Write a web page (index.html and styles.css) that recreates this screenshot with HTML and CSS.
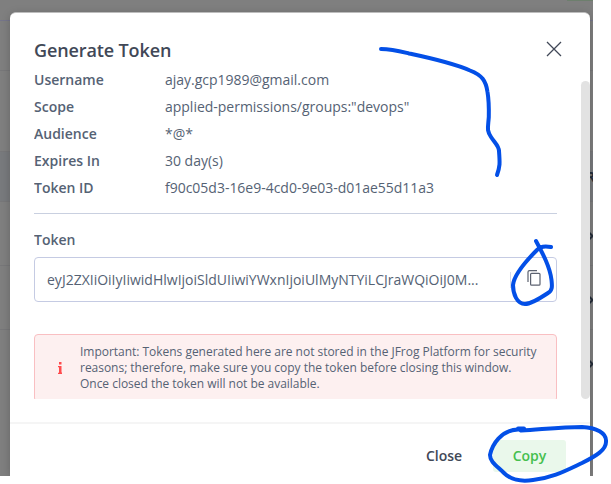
FILE: index.html
```html
<!DOCTYPE html>
<html lang="en">
<head>
<meta charset="utf-8">
<title>Generate Token</title>
<link rel="stylesheet" href="styles.css">
</head>
<body>
<div class="backdrop">
  <svg class="page-behind" width="593" height="476" viewBox="0 0 593 476">
    <rect y="151" width="593" height="50" fill="#787a7d"/>
    <path d="M0 20.500H593" stroke="#75758a"/>
    <path d="M0 70.500H593M0 151.500H593M0 201.500H593M0 265.500H593M0 329.500H593" stroke="#777779"/>
    <rect x="567" width="26" height="1" fill="#6d7f6d"/>
    <text x="586" y="182" class="behind-text">R</text>
    <path d="M588.500 232l4 4-4 4M588.500 296l4 4-4 4M588.500 360l4 4-4 4" fill="none" stroke="#252d3a" stroke-width="2"/>
  </svg>
  <section class="dialog">
    <header class="header">
      <h1>Generate Token</h1>
      <svg class="close-icon" width="16" height="16" viewBox="0 0 16 16"><path d="M1 1l14 14M15 1L1 15"/></svg>
    </header>
    <div class="body">
      <div class="content">
        <dl class="details">
          <dt>Username</dt><dd>ajay.gcp1989@gmail.com</dd>
          <dt>Scope</dt><dd>applied-permissions/groups:"devops"</dd>
          <dt>Audience</dt><dd>*@*</dd>
          <dt>Expires In</dt><dd>30 day(s)</dd>
          <dt>Token ID</dt><dd>f90c05d3-16e9-4cd0-9e03-d01ae55d11a3</dd>
        </dl>
        <div class="label">Token</div>
        <div class="field">
          <span class="value">eyJ2ZXIiOiIyIiwidHlwIjoiSldUIiwiYWxnIjoiUlMyNTYiLCJraWQiOiJ0M...</span>
          <span class="copy-cell"><svg width="14" height="16" viewBox="0 0 14 16"><path d="M1 12V2Q1 .6 2.500 .6H10" /><rect x="3.600" y="3.300" width="9.400" height="11.900" rx="1"/></svg></span>
        </div>
        <div class="notice">
          <svg class="info" width="4" height="12" viewBox="0 0 4 12"><path d="M1 0h2.500v2.400H1zM0 4h3.500v6.500H4V12H0v-1.200h1V5.200H0z"/></svg>
          <p>Important: Tokens generated here are not stored in the JFrog Platform for security<br>reasons; therefore, make sure you copy the token before closing this window.<br>Once closed the token will not be available.</p>
        </div>
      </div>
      <div class="scrollbar"></div>
    </div>
    <footer class="footer">
      <button class="close">Close</button>
      <button class="copy">Copy</button>
    </footer>
  </section>
</div>
<svg class="ink" width="611" height="484" viewBox="0 0 611 484">
  <path d="M381 49C392 49 399 51 409 53.500C430 58 450 62 470 70.500C482 75 486 81 487.500 92C489 101 489 108 488.800 117C488 128 486.500 130 491 137C495 143 499 146 499 151C500 164 500 166 497 175"/>
  <path d="M551 247Q541 245 537 250C524 263 514 275 513 285C513 294 517 304 525 304C530 304 542 297 548 293C553 290 552 285 551.500 280C550 267 543 254 536 241"/>
  <path d="M524 428.500H518L521 430.500C545 429 563 427 582 427C596 427.500 607 433 606 442C606 450 596 456 582 463C565 471 552 478 533 480C520 482 511 480 504 473C497 466 490 462 490 455C492 445 501 430 518 429.500"/>
</svg>
</body>
</html>
```

FILE: styles.css
```css
* { box-sizing: border-box; }
body {
  margin: 0;
  width: 611px;
  height: 484px;
  overflow: hidden;
  background: #fff;
  color: #556274;
  font: 14px/20px "Open Sans", "Noto Sans", sans-serif;
}
.backdrop {
  position: relative;
  width: 593px;
  height: 476px;
  padding: 12px 3px 0 10px;
  background: #7f7f7f;
}
.page-behind { position: absolute; left: 0; top: 0; }
.behind-text { font-weight: 700; font-size: 14px; fill: #252d3a; }
.dialog {
  position: relative;
  display: flex;
  flex-direction: column;
  height: 464px;
  background: #fff;
  border-top: 1px solid #bdbdbd;
  border-radius: 6px 6px 0 0;
  box-shadow: 0 2px 10px rgba(0, 0, 0, .2);
  clip-path: inset(-12px -3px 0 -10px);
}
.header {
  display: flex;
  justify-content: space-between;
  height: 53px;
  padding: 24px 28px 0 24px;
}
h1 {
  margin: 0;
  font-size: 18px;
  line-height: 26px;
  font-weight: 600;
  letter-spacing: -.12px;
  color: #414857;
}
.close-icon {
  margin-top: 4px;
  fill: none;
  stroke: #414857;
  stroke-width: 1.3;
}
.body { display: flex; height: 333px; }
.content { width: 523px; margin-left: 24px; overflow: hidden; }
.scrollbar { width: 9px; margin: 15px 0 0 24px; border-radius: 5px; background: #e2e2e2; }
.details {
  display: grid;
  grid-template-columns: 131px 1fr;
  grid-auto-rows: 27px;
  margin: 0;
  height: 148px;
  line-height: 27px;
  border-bottom: 1px solid #c9d0e0;
}
dt, .label { font-weight: 600; }
dd { margin: 0; letter-spacing: -.015px; }
.label { margin-top: 16px; }
.field {
  display: flex;
  align-items: center;
  height: 45px;
  margin-top: 7px;
  padding-left: 12px;
  border: 1px solid #c5cbe3;
  border-radius: 4px;
}
.value { width: 463px; white-space: nowrap; }
.copy-cell {
  display: flex;
  align-items: center;
  height: 16px;
  padding-left: 16px;
  border-left: 1px solid #d5daea;
}
.copy-cell svg { margin-top: -3px; fill: none; stroke: #5c6270; stroke-width: 1.2; }
.notice {
  display: flex;
  align-items: center;
  height: 68px;
  margin-top: 32px;
  padding-left: 23px;
  border: 1px solid #f9bfc2;
  border-radius: 4px;
  background: #fdf0f0;
}
.info { fill: #ff4b4d; }
.notice p {
  margin: 0 0 0 18px;
  font-size: 12px;
  line-height: 16px;
  letter-spacing: -.025px;
  white-space: nowrap;
}
.footer {
  display: flex;
  justify-content: flex-end;
  margin-top: 23px;
  padding: 16px 24px 0;
  height: 54px;
  border-top: 2px solid #f5f5f5;
}
button {
  height: 32px;
  padding: 0;
  border: 0;
  border-radius: 3px;
  background: none;
  color: #414857;
  font: 600 14px/32px "Open Sans", sans-serif;
}
.close { width: 76px; margin-right: 11px; }
.copy { width: 73px; color: #45bf4e; background: #eaf8eb; }
.ink {
  position: absolute;
  left: 0;
  top: 0;
  fill: none;
  stroke: #034fe7;
  stroke-width: 4;
  stroke-linecap: round;
  stroke-linejoin: round;
}
```
